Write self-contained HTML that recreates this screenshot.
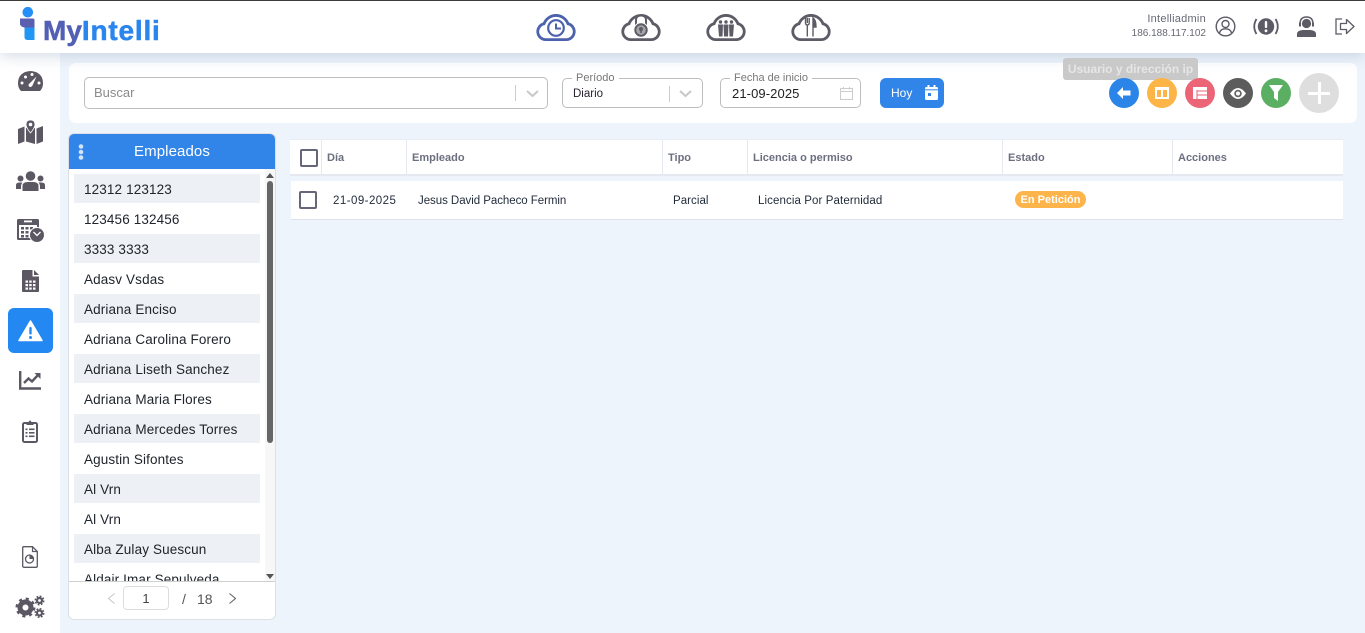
<!DOCTYPE html>
<html lang="es"><head><meta charset="utf-8"><title>MyIntelli</title>
<style>
*{box-sizing:border-box}
html,body{margin:0;padding:0}
body{width:1365px;height:633px;overflow:hidden;position:relative;background:#eef4fc;font-family:"Liberation Sans",sans-serif;color:#222b36}
.a{position:absolute}
.t{position:absolute;white-space:nowrap}
svg{position:absolute;overflow:visible}
.row{position:absolute;left:74px;width:186px;height:29px;line-height:31px;padding-left:10px;font-size:13.5px;letter-spacing:.13px;color:#20252c;white-space:nowrap}
.row.g{background:#edf1f5}
.th{position:absolute;top:139px;height:37px;background:#fff;border-top:1px solid #e9ecf3;border-right:1px solid #e6e8f0;border-bottom:2px solid #e6e8f0;font-size:11px;font-weight:bold;color:#6c6f80;line-height:37px;padding-left:5px;white-space:nowrap}
.td{position:absolute;top:195px;font-size:11.5px;line-height:13px;letter-spacing:.05px;color:#1f2a38;white-space:nowrap}
.lb{position:absolute;background:#fff;font-size:11px;color:#777;padding:0 4px;line-height:12px;white-space:nowrap}
.box{position:absolute;background:#fff;border:1px solid #bdbdbd;border-radius:5px}
.c{position:absolute;border-radius:50%;width:30px;height:30px;top:78px}
</style></head><body>

<!-- header -->
<div class="a" style="left:0;top:0;width:1365px;height:53px;background:#fff;border-top:1px solid #3a3a3a;box-shadow:0 3px 14px rgba(110,135,170,.3);z-index:3"></div>
<div class="a" style="left:0;top:53px;width:60px;height:580px;background:#fff;z-index:2"></div>

<div style="position:absolute;left:0;top:0;width:1365px;height:53px;z-index:4">
<!-- logo -->
<svg style="left:20px;top:7px" width="16" height="34" viewBox="0 0 16 34"><circle cx="7.800" cy="5.200" r="5.300" fill="#2490f5"/><path d="M0 11.500H12.500Q14.500 11.500 14.500 13.500V33H8Q4.500 33 4.500 30V20Q1.500 20 0 17.500Z" fill="#2196f3"/><path d="M0 11.500H12.500Q14.500 11.500 14.500 13.500V20.500H4.500Q1 20 0 17Z" fill="#5a5fb0"/></svg>
<div class="t" style="left:43px;top:15px;font-size:28px;font-weight:bold;line-height:32px;color:#5160b4;-webkit-text-stroke:.5px currentColor">My<span style="color:#2a86ec;letter-spacing:.8px">Intelli</span></div>

<!-- cloud icons -->
<svg style="left:536px;top:13px" width="40" height="28" viewBox="0 0 40 28"><path d="M10 26.600H30A8 8 0 0 0 32 10.800A12.800 12.800 0 0 0 8 10.800A8 8 0 0 0 10 26.600Z" fill="none" stroke="#4c62ad" stroke-width="2.800"/><circle cx="20" cy="15" r="7.800" fill="#fff" stroke="#4c62ad" stroke-width="2.200"/><path d="M20 10.500V15.500H25" fill="none" stroke="#4c62ad" stroke-width="2"/></svg>
<svg style="left:621px;top:13px" width="40" height="28" viewBox="0 0 40 28"><path d="M10 26.600H30A8 8 0 0 0 32 10.800A12.800 12.800 0 0 0 8 10.800A8 8 0 0 0 10 26.600Z" fill="none" stroke="#5d5b66" stroke-width="2.800"/><path d="M15 12V7Q15 2.500 20 2.500Q25 2.500 25 7V12" fill="#fff" stroke="#5d5b66" stroke-width="2"/><circle cx="20" cy="17" r="7.200" fill="#5d5b66" stroke="#fff" stroke-width="1"/><circle cx="20" cy="17" r="4.800" fill="#a5a5a8"/><circle cx="20" cy="16" r="2" fill="#5d5b66"/><rect x="19.200" y="16.500" width="1.600" height="3.500" fill="#5d5b66"/></svg>
<svg style="left:706px;top:13px" width="40" height="28" viewBox="0 0 40 28"><path d="M10 26.600H30A8 8 0 0 0 32 10.800A12.800 12.800 0 0 0 8 10.800A8 8 0 0 0 10 26.600Z" fill="none" stroke="#5d5b66" stroke-width="2.800"/><g fill="#5d5b66"><circle cx="14.500" cy="9" r="1.700"/><circle cx="20" cy="9" r="1.700"/><circle cx="25.500" cy="9" r="1.700"/><path d="M12 11.500H17L16.500 23.500H13Z"/><path d="M17.500 11.500H22.500L22 23.500H18Z"/><path d="M23 11.500H28L27 23.500H23.500Z"/></g></svg>
<svg style="left:791px;top:13px" width="40" height="28" viewBox="0 0 40 28"><path d="M10 26.600H30A8 8 0 0 0 32 10.800A12.800 12.800 0 0 0 8 10.800A8 8 0 0 0 10 26.600Z" fill="none" stroke="#5d5b66" stroke-width="2.800"/><path d="M14.500 5V10Q14.500 12 16.300 12V23.500M16.300 5V10M18.200 5V10Q18.200 12 16.300 12" fill="none" stroke="#5d5b66" stroke-width="1.400"/><path d="M22 23.500V5Q25 7 25 14H22" fill="#5d5b66" stroke="#5d5b66" stroke-width="1.400"/></svg>

<!-- right user -->
<div class="t" style="right:159px;top:13px;font-size:11px;letter-spacing:.25px;line-height:13px;color:#666874">Intelliadmin</div>
<div class="t" style="right:159px;top:27px;font-size:10px;line-height:13px;color:#666874">186.188.117.102</div>
<svg style="left:1215px;top:16px" width="21" height="21" viewBox="0 0 21 21"><circle cx="10.500" cy="10.500" r="9.300" fill="none" stroke="#5d5b66" stroke-width="1.400"/><circle cx="10.500" cy="8" r="3.500" fill="none" stroke="#5d5b66" stroke-width="1.400"/><path d="M4.500 17Q5.500 12.800 10.500 12.800Q15.500 12.800 16.500 17" fill="none" stroke="#5d5b66" stroke-width="1.400"/></svg>
<svg style="left:1253px;top:16px" width="26" height="21" viewBox="0 0 26 21"><circle cx="13" cy="10.500" r="8.200" fill="#5d5b66"/><rect x="11.800" y="5" width="2.400" height="7" rx="1" fill="#fff"/><circle cx="13" cy="14.800" r="1.400" fill="#fff"/><path d="M3.500 3Q-1 10.500 3.500 18M22.500 3Q27 10.500 22.500 18" fill="none" stroke="#5d5b66" stroke-width="1.800"/></svg>
<svg style="left:1297px;top:16px" width="19" height="21" viewBox="0 0 19 21"><circle cx="9.500" cy="7.500" r="4.600" fill="#5d5b66"/><path d="M3 8Q3 1 9.500 1Q16 1 16 8" fill="none" stroke="#5d5b66" stroke-width="1.400"/><rect x="2" y="6.500" width="2" height="4" fill="#5d5b66"/><rect x="15" y="6.500" width="2" height="4" fill="#5d5b66"/><path d="M0 21V18Q0 14.500 5.500 14H13.500Q19 14.500 19 18V21Z" fill="#5d5b66"/></svg>
<svg style="left:1335px;top:18px" width="20" height="17" viewBox="0 0 20 17"><path d="M7 1H1V16H7" fill="none" stroke="#5d5b66" stroke-width="1.300"/><path d="M5.500 5.500H11.500V1.500L19 8.500L11.500 15.500V11.500H5.500Z" fill="none" stroke="#5d5b66" stroke-width="1.300" stroke-linejoin="round"/></svg>
</div>

<!-- sidebar -->
<div style="position:absolute;left:0;top:0;width:60px;height:633px;z-index:5">
<svg style="left:18px;top:71px" width="25" height="20" viewBox="0 0 25 20"><path d="M3 20Q0 17 0 12.500Q0 1 12.500 0Q25 1 25 12.500Q25 17 22 20Z" fill="#5b5763"/><g fill="#fff"><circle cx="4" cy="12" r="1.500"/><circle cx="7.500" cy="6" r="1.500"/><circle cx="14" cy="3.500" r="1.500"/><circle cx="21" cy="12" r="1.500"/><path d="M18.500 5.500L14.500 14.500Q13 17 11 15.500Q10 14 11 13Z"/></g></svg>
<svg style="left:18px;top:120px" width="25" height="24" viewBox="0 0 25 24"><path d="M0 9L6.500 6.500V21.500L0 24Z M8 8L11 7 L12.500 11 L14 7 L17 8V24L8 21.500Z M18.500 8.500L25 6V21.500L18.500 24Z" fill="#5b5763"/><path d="M12.500 0Q17 0 17 4.500Q17 7.500 12.500 13Q8 7.500 8 4.500Q8 0 12.500 0Z" fill="#5b5763" stroke="#fff" stroke-width=".8"/><circle cx="12.500" cy="4.500" r="1.800" fill="#fff"/></svg>
<svg style="left:16px;top:171px" width="29" height="20" viewBox="0 0 29 20"><g fill="#5b5763"><circle cx="14.500" cy="5" r="4.800"/><path d="M6.500 20V15Q6.500 11 12 11H17Q22.500 11 22.500 15V20Z"/><circle cx="4.500" cy="7.500" r="3"/><path d="M0 18V14Q0 11.500 4 11.500H6.500Q5 13 5 15V18Z"/><circle cx="24.500" cy="7.500" r="3"/><path d="M29 18V14Q29 11.500 25 11.500H22.500Q24 13 24 15V18Z"/></g></svg>
<svg style="left:17px;top:218px" width="28" height="25" viewBox="0 0 28 25"><rect x="0" y="1" width="22" height="21" rx="1.500" fill="#5b5763"/><rect x="2" y="7" width="18" height="13" fill="#fff"/><rect x="7" y="2.500" width="8" height="1.800" fill="#fff"/><g fill="#5b5763"><rect x="4" y="9" width="3" height="2.500"/><rect x="8.500" y="9" width="3" height="2.500"/><rect x="13" y="9" width="3" height="2.500"/><rect x="4" y="13" width="3" height="2.500"/><rect x="8.500" y="13" width="3" height="2.500"/><rect x="4" y="17" width="3" height="2.500"/><rect x="8.500" y="17" width="3" height="2.500"/></g><circle cx="20" cy="17" r="7.500" fill="#5b5763" stroke="#fff" stroke-width="1"/><path d="M16.500 14L20 17.500L23.500 14" fill="none" stroke="#fff" stroke-width="1.300"/></svg>
<svg style="left:22px;top:270px" width="17" height="22" viewBox="0 0 17 22"><path d="M1 0H10.500V6.500H17V21Q17 22 16 22H1Q0 22 0 21V1Q0 0 1 0Z" fill="#5b5763"/><path d="M12 0L17 5H12Z" fill="#5b5763"/><g fill="#fff"><rect x="3.500" y="10.500" width="2.500" height="2.200"/><rect x="7.200" y="10.500" width="2.500" height="2.200"/><rect x="11" y="10.500" width="2.500" height="2.200"/><rect x="3.500" y="14" width="2.500" height="2.200"/><rect x="7.200" y="14" width="2.500" height="2.200"/><rect x="11" y="14" width="2.500" height="2.200"/><rect x="3.500" y="17.500" width="2.500" height="2.200"/><rect x="7.200" y="17.500" width="2.500" height="2.200"/><rect x="11" y="17.500" width="2.500" height="2.200"/></g></svg>
<div class="a" style="left:8px;top:308px;width:45px;height:45px;border-radius:6px;background:#2488f3"></div>
<svg style="left:18px;top:320px" width="25" height="22" viewBox="0 0 25 22"><path d="M12.500 1L24 20.500H1Z" fill="#fff" stroke="#fff" stroke-width="1.500" stroke-linejoin="round"/><rect x="11.300" y="7" width="2.400" height="7.500" rx="1" fill="#2488f3"/><circle cx="12.500" cy="17.500" r="1.500" fill="#2488f3"/></svg>
<svg style="left:19px;top:371px" width="23" height="19" viewBox="0 0 23 19"><path d="M1.200 0V17.500H22" fill="none" stroke="#5b5763" stroke-width="2.400"/><path d="M5 12L9.500 7.500L13 10.500L19 4" fill="none" stroke="#5b5763" stroke-width="2.400"/><path d="M15.500 2H21.500V8Z" fill="#5b5763"/></svg>
<svg style="left:22px;top:420px" width="16" height="23" viewBox="0 0 16 23"><rect x="1" y="3" width="14" height="19" rx="1.500" fill="#fff" stroke="#5b5763" stroke-width="2"/><path d="M4.500 5V2.500H6.500Q7 .5 8 .5Q9 .5 9.500 2.500H11.500V5Z" fill="#5b5763"/><g fill="#5b5763"><rect x="3.500" y="8.500" width="2" height="1.600"/><rect x="7" y="8.500" width="5.500" height="1.600"/><rect x="3.500" y="12" width="2" height="1.600"/><rect x="7" y="12" width="5.500" height="1.600"/><rect x="3.500" y="15.500" width="2" height="1.600"/><rect x="7" y="15.500" width="5.500" height="1.600"/></g></svg>
<svg style="left:22px;top:546px" width="16" height="22" viewBox="0 0 16 22"><path d="M1.500.7H10.500L15.300 5.500V20Q15.300 21.300 14 21.300H2Q.7 21.300 .7 20V1.500Q.7.700 1.500.7Z" fill="none" stroke="#5b5763" stroke-width="1.300"/><path d="M10.500 1V5.500H15" fill="none" stroke="#5b5763" stroke-width="1.200"/><circle cx="7.500" cy="13" r="4" fill="none" stroke="#5b5763" stroke-width="1.300"/><path d="M7.500 13V9.200A4 4 0 0 1 11.500 13Z" fill="#5b5763"/></svg>
<svg style="left:16px;top:596px" width="29" height="22" viewBox="0 0 29 22"><g fill="none" stroke="#5b5763"><circle cx="9.500" cy="11.500" r="5.500" stroke-width="5"/><circle cx="9.500" cy="11.500" r="8.600" stroke-width="2.800" stroke-dasharray="3 3.750"/><circle cx="23.500" cy="4.500" r="2.500" stroke-width="2.200"/><circle cx="23.500" cy="4.500" r="4.200" stroke-width="1.600" stroke-dasharray="1.800 1.500"/><circle cx="23.500" cy="17" r="2.500" stroke-width="2.200"/><circle cx="23.500" cy="17" r="4.200" stroke-width="1.600" stroke-dasharray="1.800 1.500"/></g></svg>
</div>

<!-- filter card -->
<div class="a" style="left:69px;top:63px;width:1288px;height:60px;background:#fff;border-radius:7px"></div>
<div class="box" style="left:84px;top:77px;width:464px;height:32px"></div>
<div class="t" style="left:94px;top:85px;font-size:13px;line-height:16px;color:#8b8b8b">Buscar</div>
<div class="a" style="left:515px;top:85px;width:1px;height:16px;background:#ccc"></div>
<svg style="left:526px;top:90px" width="13" height="8" viewBox="0 0 13 8"><path d="M1 1L6.500 6L12 1" fill="none" stroke="#c8c8c8" stroke-width="2"/></svg>

<div class="box" style="left:562px;top:78px;width:141px;height:30px"></div>
<div class="lb" style="left:572px;top:72px">Período</div>
<div class="t" style="left:573px;top:87px;font-size:11.500px;line-height:14px;color:#2a2230">Diario</div>
<div class="a" style="left:669px;top:86px;width:1px;height:16px;background:#ccc"></div>
<svg style="left:679px;top:90px" width="13" height="8" viewBox="0 0 13 8"><path d="M1 1L6.500 6L12 1" fill="none" stroke="#c8c8c8" stroke-width="2"/></svg>

<div class="box" style="left:720px;top:78px;width:141px;height:30px"></div>
<div class="lb" style="left:730px;top:72px">Fecha de inicio</div>
<div class="t" style="left:732px;top:86px;font-size:13px;letter-spacing:.1px;line-height:16px;color:#222">21-09-2025</div>
<svg style="left:840px;top:87px" width="14" height="13" viewBox="0 0 14 13"><rect x=".5" y="1.500" width="12" height="11" fill="none" stroke="#ccc"/><path d="M.5 4.500H12.500M3.500 0V2.500M9.500 0V2.500" fill="none" stroke="#ccc"/></svg>

<div class="a" style="left:880px;top:78px;width:64px;height:30px;border-radius:6px;background:#3285e8"></div>
<div class="t" style="left:891px;top:86px;font-size:12px;line-height:14px;color:#fff">Hoy</div>
<svg style="left:925px;top:85px" width="13" height="15" viewBox="0 0 13 15"><rect x="0" y="2" width="13" height="13" rx="1.500" fill="#fff"/><rect x="2.500" y="0" width="2" height="3" fill="#fff"/><rect x="8.500" y="0" width="2" height="3" fill="#fff"/><rect x="0" y="4.300" width="13" height="1" fill="#3285e8"/><rect x="3" y="8" width="3" height="3" fill="#3285e8"/></svg>

<!-- tooltip -->
<div class="a" style="left:1063px;top:58px;width:135px;height:22px;background:#c9c9c9;border-radius:3px;color:#e6e6e6;font-size:12px;font-weight:bold;line-height:22px;text-align:center;white-space:nowrap;z-index:6">Usuario y dirección ip</div>

<!-- circle buttons -->
<div class="c" style="left:1109px;background:#2b85e8;z-index:7"></div>
<svg style="left:1117px;top:87px;z-index:8" width="14" height="12" viewBox="0 0 14 12"><path d="M0 6L6 0V3.500H13.500V8.500H6V12Z" fill="#fff"/></svg>
<div class="c" style="left:1147px;background:#fdb548;z-index:7"></div>
<svg style="left:1155px;top:87px;z-index:8" width="14" height="12" viewBox="0 0 14 12"><path d="M0 0H14V12H0Z M2 3V10H6V3Z M8 3V10H12V3Z" fill="#fff" fill-rule="evenodd"/></svg>
<div class="c" style="left:1185px;background:#ec6577;z-index:7"></div>
<svg style="left:1193px;top:87px;z-index:8" width="14" height="12" viewBox="0 0 14 12"><rect width="14" height="12" fill="#fff"/><path d="M4 3V12M4 4H14M4 8H14" fill="none" stroke="#ec6577" stroke-width="1"/></svg>
<div class="c" style="left:1223px;background:#5c5c5c;z-index:7"></div>
<svg style="left:1230px;top:88px;z-index:8" width="16" height="11" viewBox="0 0 16 11"><path d="M0 5.500Q4 0 8 0Q12 0 16 5.500Q12 11 8 11Q4 11 0 5.500Z" fill="#fff"/><circle cx="8" cy="5.500" r="3.800" fill="#666"/><circle cx="8" cy="5.500" r="2" fill="#fff"/></svg>
<div class="c" style="left:1261px;background:#5aaf63;z-index:7"></div>
<svg style="left:1269px;top:85px;z-index:8" width="14" height="16" viewBox="0 0 14 16"><path d="M0 0H14L9 7V16L5 13V7Z" fill="#fff"/></svg>
<div class="c" style="left:1299px;top:73px;width:40px;height:40px;background:#dedede;z-index:7"></div>
<div class="a" style="left:1308px;top:91.500px;width:22px;height:3px;background:#fff;z-index:8"></div>
<div class="a" style="left:1317.500px;top:82px;width:3px;height:22px;background:#fff;z-index:8"></div>

<!-- employee panel -->
<div class="a" style="left:68px;top:133px;width:208px;height:487px;background:#fff;border:1px solid #dcdfe4;border-radius:6px"></div>
<div class="a" style="left:69px;top:134px;width:206px;height:35px;background:#3285e8;border-radius:5px 5px 0 0;color:#fff;font-size:15px;letter-spacing:.1px;line-height:36px;text-align:center">Empleados</div>
<svg style="left:78px;top:144px" width="6" height="16" viewBox="0 0 6 16"><circle cx="3" cy="2.500" r="2.300" fill="#cfe3fb"/><circle cx="3" cy="8" r="2.300" fill="#cfe3fb"/><circle cx="3" cy="13.500" r="2.300" fill="#cfe3fb"/></svg>
<div class="row g" style="top:174px">12312 123123</div>
<div class="row" style="top:204px">123456 132456</div>
<div class="row g" style="top:234px">3333 3333</div>
<div class="row" style="top:264px">Adasv Vsdas</div>
<div class="row g" style="top:294px">Adriana Enciso</div>
<div class="row" style="top:324px">Adriana Carolina Forero</div>
<div class="row g" style="top:354px">Adriana Liseth Sanchez</div>
<div class="row" style="top:384px">Adriana Maria Flores</div>
<div class="row g" style="top:414px">Adriana Mercedes Torres</div>
<div class="row" style="top:444px">Agustin Sifontes</div>
<div class="row g" style="top:474px">Al Vrn</div>
<div class="row" style="top:504px">Al Vrn</div>
<div class="row g" style="top:534px">Alba Zulay Suescun</div>
<div class="a" style="left:74px;top:564px;width:186px;height:17px;overflow:hidden"><div class="row" style="left:0;top:0">Aldair Imar Sepulveda</div></div>
<div class="a" style="left:265px;top:169px;width:10px;height:412px;background:#f7f7f7"></div>
<div class="a" style="left:267px;top:181px;width:6px;height:262px;background:#666;border-radius:3px"></div>
<svg style="left:266px;top:173px" width="8" height="5" viewBox="0 0 8 5"><path d="M4 0L8 5H0Z" fill="#555"/></svg>
<svg style="left:266px;top:574px" width="8" height="5" viewBox="0 0 8 5"><path d="M4 5L8 0H0Z" fill="#555"/></svg>
<div class="a" style="left:69px;top:581px;width:206px;height:1px;background:#cfcfcf"></div>
<svg style="left:107px;top:593px" width="9" height="11" viewBox="0 0 9 11"><path d="M7.500 .5L1.500 5.500L7.500 10.500" fill="none" stroke="#c8c8c8" stroke-width="1.100"/></svg>
<div class="a" style="left:123px;top:586px;width:46px;height:24px;border:1px solid #ddd;border-radius:4px;background:#fff;font-size:13px;line-height:23px;text-align:center;color:#444">1</div>
<div class="t" style="left:182px;top:591px;font-size:14px;line-height:16px;color:#555">/</div>
<div class="t" style="left:197px;top:591px;font-size:14px;line-height:16px;color:#555">18</div>
<svg style="left:228px;top:593px" width="9" height="11" viewBox="0 0 9 11"><path d="M1.500 .5L7.500 5.500L1.500 10.500" fill="none" stroke="#666" stroke-width="1.100"/></svg>

<!-- table -->
<div class="th" style="left:290px;width:32px"></div>
<div class="a" style="left:300px;top:149px;width:18px;height:18px;border:2px solid #66667a;border-radius:2px"></div>
<div class="th" style="left:322px;width:85px">Día</div>
<div class="th" style="left:407px;width:256px">Empleado</div>
<div class="th" style="left:663px;width:85px">Tipo</div>
<div class="th" style="left:748px;width:255px">Licencia o permiso</div>
<div class="th" style="left:1003px;width:170px">Estado</div>
<div class="th" style="left:1173px;width:170px;border-right:0">Acciones</div>

<div class="a" style="left:291px;top:181px;width:1052px;height:39px;background:#fff;border-bottom:1px solid #dfe2ea"></div>
<div class="a" style="left:299px;top:191px;width:18px;height:18px;border:2px solid #66667a;border-radius:2px"></div>
<div class="td" style="left:333px;letter-spacing:.45px">21-09-2025</div>
<div class="td" style="left:418px;letter-spacing:-.05px">Jesus David Pacheco Fermin</div>
<div class="td" style="left:673px">Parcial</div>
<div class="td" style="left:758px;letter-spacing:.1px">Licencia Por Paternidad</div>
<div class="a" style="left:1015px;top:191px;width:71px;height:17px;border-radius:9px;background:#fdb44b;color:#fff;font-size:11px;font-weight:bold;line-height:18px;text-align:center;white-space:nowrap">En Petición</div>

</body></html>
